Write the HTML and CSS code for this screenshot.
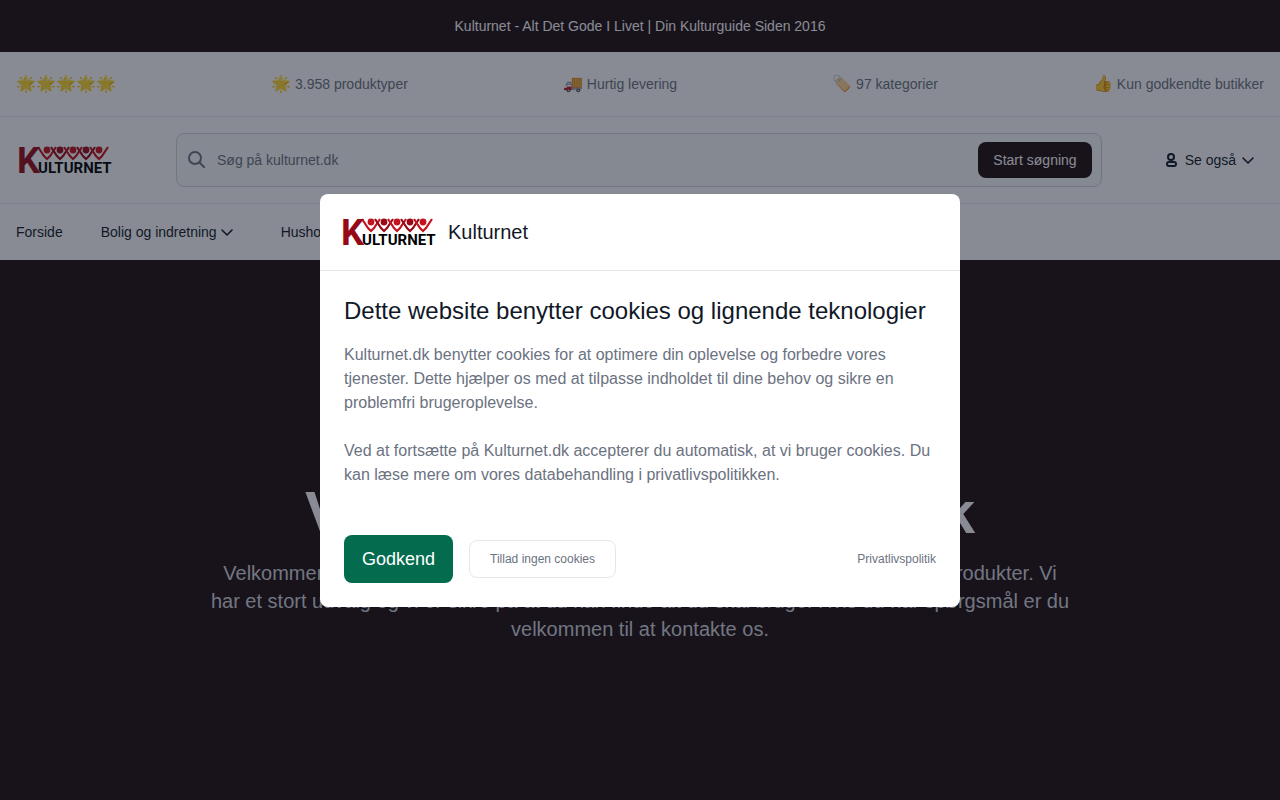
FILE: index.html
```html
<!DOCTYPE html>
<html lang="da">

<head>
    <meta charset="UTF-8">
    <meta name="viewport" content="width=device-width, initial-scale=1.0">
    <title>Kulturnet</title>
    <link rel="stylesheet" href="styles.css">
</head>

<body>
    <svg width="0" height="0" class="sprite" aria-hidden="true">
        <symbol id="chevron" viewBox="0 0 20 20">
            <path d="M5 8l5 5 5-5" fill="none" stroke="currentColor" stroke-width="1.6" stroke-linecap="round" stroke-linejoin="round" />
        </symbol>
        <symbol id="people" viewBox="0 0 96 36">
            <g fill="none" stroke-width="2.2">
                <path d="M22 5l6 9 3 3 3-3 6-9" stroke="#c4121f" />
                <path d="M35 5l6 9 3 3 3-3 6-9" stroke="#960a18" />
                <path d="M48 5l6 9 3 3 3-3 6-9" stroke="#c4121f" />
                <path d="M61 5l6 9 3 3 3-3 6-9" stroke="#960a18" />
                <path d="M74 5l6 9 3 3 3-3 6-9" stroke="#c4121f" />
            </g>
            <g fill="#c4121f">
                <circle cx="31" cy="8" r="3.4" />
                <circle cx="44" cy="8" r="3.4" fill="#960a18" />
                <circle cx="57" cy="8" r="3.4" />
                <circle cx="70" cy="8" r="3.4" fill="#960a18" />
                <circle cx="83" cy="8" r="3.4" />
            </g>
        </symbol>
    </svg>

    <div class="topbar">Kulturnet - Alt Det Gode I Livet | Din Kulturguide Siden 2016</div>

    <header>
        <ul class="usp">
            <li><span>🌟🌟🌟🌟🌟</span></li>
            <li><span>🌟</span> 3.958 produktyper</li>
            <li><span>🚚</span> Hurtig levering</li>
            <li><span>🏷️</span> 97 kategorier</li>
            <li><span>👍</span> Kun godkendte butikker</li>
        </ul>
        <div class="search_row">
            <a href="#">
                <svg class="logo" viewBox="0 0 96 36">
                    <use href="#people" />
                    <text x="1" y="31" class="logo_k">K</text>
                    <text x="22" y="31" class="logo_rest">ULTURNET</text>
                </svg>
            </a>
            <form class="search">
                <svg class="search_icon" viewBox="0 0 20 20">
                    <circle cx="8" cy="8" r="6" />
                    <path d="M13 13l4 4" />
                </svg>
                <input type="search" placeholder="Søg på kulturnet.dk" aria-label="Søg på kulturnet.dk">
                <button type="button">Start søgning</button>
            </form>
            <button type="button" class="see_also">
                <svg class="user_icon" viewBox="0 0 14 16">
                    <circle cx="7" cy="5" r="3" />
                    <rect x="3" y="10" width="9" height="4" rx="2" />
                </svg>
                Se også
                <svg class="chevron"><use href="#chevron" /></svg>
            </button>
        </div>
        <nav>
            <a href="#">Forside</a>
            <button type="button">Bolig og indretning <svg class="chevron"><use href="#chevron" /></svg></button>
            <button type="button">Husholdning <svg class="chevron"><use href="#chevron" /></svg></button>
        </nav>
    </header>

    <main class="hero">
        <h1>Velkommen til kultur.dk</h1>
        <p>Velkommen til Kulturnet.dk. Her kan du finde et stort udvalg af mange, forskellige produkter. Vi har et stort udvalg og vi er sikre på at du kan finde alt du skal bruge. Hvis du har spørgsmål er du velkommen til at kontakte os.</p>
    </main>

    <div class="overlay">
        <div class="cookie_box" role="dialog" aria-labelledby="cookie_title">
            <div class="cookie_head">
                <svg class="logo" viewBox="0 0 96 36">
                    <use href="#people" />
                    <text x="1" y="31" class="logo_k">K</text>
                    <text x="22" y="31" class="logo_rest">ULTURNET</text>
                </svg>
                <span>Kulturnet</span>
            </div>
            <div class="cookie_body">
                <h2 id="cookie_title">Dette website benytter cookies og lignende teknologier</h2>
                <p>Kulturnet.dk benytter cookies for at optimere din oplevelse og forbedre vores tjenester. Dette hjælper os med at tilpasse indholdet til dine behov og sikre en problemfri brugeroplevelse.</p>
                <p>Ved at fortsætte på Kulturnet.dk accepterer du automatisk, at vi bruger cookies. Du kan læse mere om vores databehandling i privatlivspolitikken.</p>
            </div>
            <div class="cookie_foot">
                <button type="button" class="accept">Godkend</button>
                <button type="button" class="reject">Tillad ingen cookies</button>
                <a href="#">Privatlivspolitik</a>
            </div>
        </div>
    </div>
</body>

</html>
```
FILE: styles.css
```css
* {
    margin: 0;
    padding: 0;
    box-sizing: border-box;
}

body {
    min-height: 100vh;
    display: flex;
    flex-direction: column;
    font-family: "Liberation Sans", Arial, sans-serif;
    font-size: 14px;
    line-height: 20px;
    color: #111827;
    background-color: #1e0c0e;
}

a {
    color: inherit;
    text-decoration: none;
}

button {
    font: inherit;
    color: inherit;
    border: none;
    background: none;
    cursor: pointer;
}

.sprite {
    position: absolute;
}

.logo {
    display: block;
    width: 96px;
    height: 36px;
    overflow: visible;
}

.logo_k {
    font: bold 36px "Roboto", sans-serif;
    fill: #960a18;
}

.logo_rest {
    font: bold 15px "Roboto", sans-serif;
    fill: #000;
}

.chevron {
    width: 20px;
    height: 20px;
}

.topbar {
    padding: 16px;
    text-align: center;
    color: #fff;
}

header {
    background-color: #fff;
}

.usp {
    display: flex;
    justify-content: space-between;
    padding: 22px 16px;
    list-style: none;
    color: #6b7280;
    border-bottom: 1px solid #e5e7eb;
}

.usp li {
    height: 20px;
}

.usp span {
    font-size: 16px;
}

.search_row {
    display: flex;
    align-items: center;
    padding: 16px;
    border-bottom: 1px solid #e5e7eb;
}

.search {
    flex: 1;
    display: flex;
    align-items: center;
    height: 54px;
    margin: 0 62px 0 64px;
    padding: 0 9px 0 10px;
    border: 1px solid #d1d5db;
    border-radius: 8px;
    background-color: #f9fafb;
}

.search_icon {
    width: 20px;
    height: 20px;
    fill: none;
    stroke: #6b7280;
    stroke-width: 2;
    stroke-linecap: round;
}

.search input {
    flex: 1;
    padding: 0 10px;
    font: inherit;
    border: none;
    outline: none;
    background: none;
}

.search input::placeholder {
    color: #6b7280;
}

.search button {
    height: 36px;
    padding: 0 15px;
    color: #fff;
    border-radius: 8px;
    background-color: #1e0c0e;
}

.see_also {
    display: flex;
    align-items: center;
    padding-right: 6px;
}

.user_icon {
    width: 14px;
    height: 16px;
    margin-right: 7px;
    fill: none;
    stroke: currentColor;
    stroke-width: 2;
}

.see_also .chevron {
    margin-left: 2px;
}

nav {
    display: flex;
    align-items: center;
    gap: 38px;
    height: 56px;
    padding: 0 16px;
}

nav button {
    display: flex;
    align-items: center;
    padding-right: 6px;
}

.hero {
    flex: 1;
    display: flex;
    flex-direction: column;
    align-items: center;
    justify-content: center;
    padding: 80px 16px 14px;
    text-align: center;
}

.hero h1 {
    margin-bottom: 16px;
    font-size: 60px;
    line-height: 60px;
    color: #fff;
}

.hero p {
    max-width: 864px;
    font-size: 20px;
    line-height: 28px;
    color: #d1d5db;
}

.overlay {
    position: fixed;
    inset: 0;
    display: flex;
    align-items: center;
    justify-content: center;
    background-color: rgba(17, 24, 39, 0.5);
}

.cookie_box {
    width: 100%;
    max-width: 640px;
    border-radius: 8px;
    background-color: #fff;
}

.cookie_head {
    display: flex;
    align-items: center;
    gap: 12px;
    padding: 20px;
    font-size: 20px;
    border-bottom: 1px solid #e5e7eb;
}

.cookie_body {
    padding: 24px 24px 0;
}

.cookie_body h2 {
    margin-bottom: 16px;
    font-size: 24px;
    font-weight: normal;
    line-height: 32px;
}

.cookie_body p {
    margin-bottom: 24px;
    font-size: 16px;
    line-height: 24px;
    color: #6b7280;
}

.cookie_foot {
    display: flex;
    align-items: center;
    gap: 16px;
    padding: 24px;
    font-size: 12px;
    color: #6b7280;
}

.accept {
    height: 48px;
    padding: 0 18px;
    font-size: 18px;
    color: #fff;
    border-radius: 8px;
    background-color: #046c4e;
}

.reject {
    height: 38px;
    padding: 0 20px;
    border: 1px solid #e5e7eb;
    border-radius: 8px;
}

.cookie_foot a {
    margin-left: auto;
}
```
